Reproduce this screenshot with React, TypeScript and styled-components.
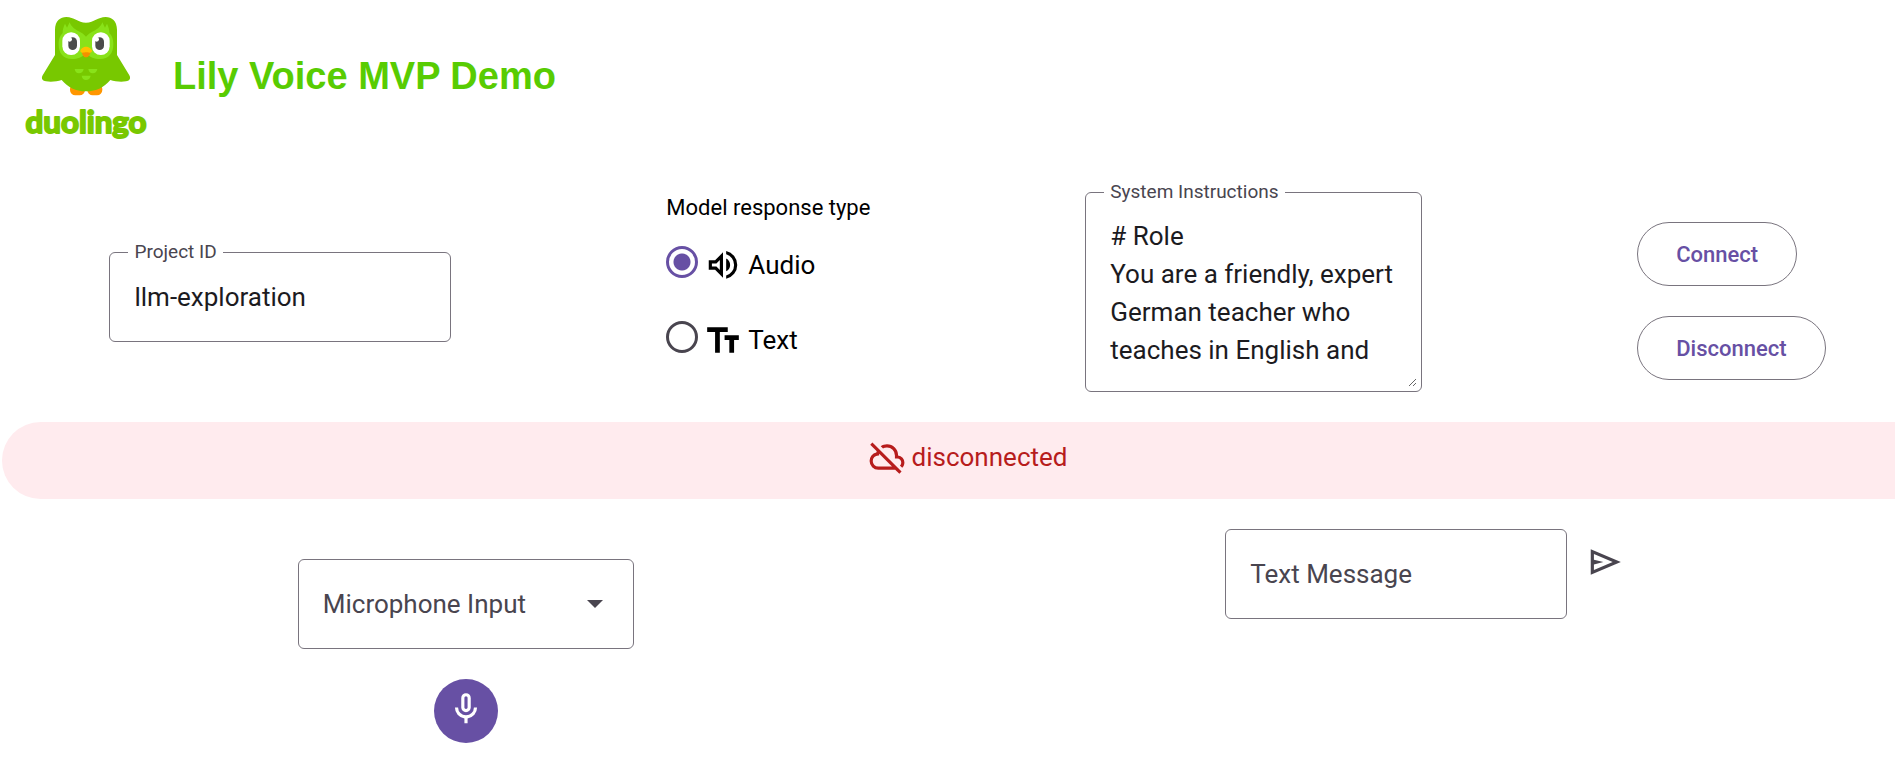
import React, { useState } from "react";
import styled, { createGlobalStyle } from "styled-components";

const color = {
  brand: "#58cc02",
  primary: "#6750a4",
  outline: "#79747e",
  text: "#1c1b1f",
  muted: "#49454f",
  error: "#b71c1c",
  errorBg: "#ffebee",
};

const GlobalStyle = createGlobalStyle`
  * { box-sizing: border-box; }
  body {
    margin: 0;
    background: #fff;
    color: #000;
    font-family: Roboto, "Liberation Sans", sans-serif;
    overflow-x: hidden;
  }
  button, input, select, textarea { font-family: inherit; }
`;

const Page = styled.div`
  width: calc(100% + 36px);
  margin-left: 2px;
  padding-bottom: 24px;
`;

const Header = styled.header`
  display: flex;
  align-items: center;
  gap: 13px;
  padding: 5px 13px 0;
`;

const Title = styled.h1`
  margin: 0;
  padding-bottom: 4px;
  color: ${color.brand};
  font: bold 38px/44px "Liberation Sans", Arial, sans-serif;
`;

const Row = styled.section<{ $align: string }>`
  display: flex;
  flex-wrap: wrap;
  justify-content: space-around;
  align-items: ${(p) => p.$align};
`;

const ConfigRow = styled(Row)`
  padding: 42px 0 20px;
`;

const MediaRow = styled(Row)`
  padding-top: 30px;
`;

const Outlined = styled.div<{ $width: number }>`
  position: relative;
  display: flex;
  width: ${(p) => p.$width}px;
  min-height: 90px;
  border: 1px solid ${color.outline};
  border-radius: 6px;
`;

const FloatingLabel = styled.label`
  position: absolute;
  top: -12px;
  left: 18px;
  padding: 0 6px;
  background: #fff;
  color: ${color.muted};
  font-size: 19px;
  line-height: 22px;
`;

const TextInput = styled.input`
  flex: 1;
  min-width: 0;
  padding: 0 24px;
  border: 0;
  outline: 0;
  background: none;
  color: ${color.text};
  font-size: 26px;
  &::placeholder { color: ${color.muted}; opacity: 1; }
`;

const InstructionsField = styled(Outlined)`
  margin-bottom: 10px;
  padding: 24px 4px 4px 0;
`;

const TextArea = styled.textarea`
  flex: 1;
  min-width: 0;
  height: 170px;
  padding: 0 20px 0 24px;
  border: 0;
  outline: 0;
  background: none;
  color: ${color.text};
  font-size: 26px;
  line-height: 38px;
  overflow: hidden;
  resize: vertical;
`;

const RadioGroup = styled.fieldset`
  margin: 0;
  padding: 0 0 32px;
  border: 0;
`;

const Legend = styled.legend`
  padding: 0;
  font-size: 22px;
  line-height: 28px;
`;

const RadioList = styled.div`
  display: flex;
  flex-direction: column;
  gap: 11px;
  padding-top: 8px;
`;

const RadioRow = styled.div`
  display: flex;
  align-items: center;
  gap: 6px;
  height: 64px;
`;

const Radio = styled.input`
  appearance: none;
  flex: none;
  width: 32px;
  height: 32px;
  margin: 0;
  border: 3px solid ${color.muted};
  border-radius: 50%;
  &:checked {
    border-color: ${color.primary};
    background: radial-gradient(circle, ${color.primary} 0 8px, transparent 9px);
  }
`;

const RadioLabel = styled.label`
  display: flex;
  align-items: center;
  gap: 6px;
  padding-top: 6px;
  font-size: 26px;
  line-height: 38px;
`;

const ButtonColumn = styled.div`
  display: flex;
  flex-direction: column;
  align-items: flex-start;
  gap: 30px;
  padding-top: 8px;
`;

const OutlinedButton = styled.button`
  height: 64px;
  padding: 0 38px;
  border: 1px solid ${color.outline};
  border-radius: 32px;
  background: none;
  color: ${color.primary};
  font-size: 22px;
  font-weight: 500;
`;

const StatusBanner = styled.div`
  display: flex;
  justify-content: center;
  align-items: center;
  gap: 6px;
  padding: 16px 0 23px;
  border-radius: 39px;
  background: ${color.errorBg};
  color: ${color.error};
  font-size: 26px;
  line-height: 38px;
`;

const MicColumn = styled.div`
  display: flex;
  flex-direction: column;
  align-items: center;
  gap: 30px;
  padding-top: 30px;
`;

const Select = styled.select`
  appearance: none;
  flex: 1;
  padding: 0 60px 0 24px;
  border: 0;
  outline: 0;
  background: none;
  color: ${color.muted};
  font-size: 26px;
`;

const SelectArrow = styled.svg`
  position: absolute;
  top: 40px;
  right: 30px;
  pointer-events: none;
`;

const MicButton = styled.button`
  display: grid;
  place-items: center;
  width: 64px;
  height: 64px;
  padding: 0 0 4px;
  border: 0;
  border-radius: 50%;
  background: ${color.primary};
  color: #fff;
`;

const MessageGroup = styled.div`
  display: flex;
  align-items: flex-start;
  gap: 6px;
`;

const SendButton = styled.button`
  display: grid;
  place-items: center;
  width: 64px;
  height: 66px;
  padding: 0;
  border: 0;
  background: none;
  color: ${color.muted};
`;

const icons = {
  volume:
    "M560-131v-82q90-26 145-100t55-168q0-94-55-168T560-749v-82q124 28 202 125.5T840-481q0 127-78 224.5T560-131ZM120-360v-240h160l200-200v640L280-360H120Zm440 40v-322q47 22 73.5 66t26.5 96q0 51-26.5 94.5T560-320ZM400-606l-86 86H200v80h114l86 86v-252Z",
  text: "M280-160v-520H80v-120h520v120H400v520H280Zm360 0v-320H520v-120h360v120H760v320H640Z",
  cloudOff:
    "M792-56 686-160H260q-92 0-156-64T40-380q0-77 47.5-137T210-594q3-8 6-15.5t6-16.5L56-792l56-56 736 736-56 56ZM260-240h346L284-562q-2 11-3 21t-1 21h-20q-58 0-99 41t-41 99q0 58 41 99t99 41Zm604 30-58-56q17-14 25.5-32.5T840-340q0-42-29-71t-71-29h-60v-80q0-83-58.5-141.5T480-720q-27 0-52 6.5T380-693l-58-58q35-24 74.5-36.5T480-800q117 0 198.5 81.5T760-520q69 8 114.5 59.5T920-340q0 39-15 72.5T864-210Z",
  mic: "M480-400q-50 0-85-35t-35-85v-240q0-50 35-85t85-35q50 0 85 35t35 85v240q0 50-35 85t-85 35Zm-40 280v-123q-104-14-172-93t-68-184h80q0 83 58.5 141.5T480-320q83 0 141.5-58.5T680-520h80q0 105-68 184t-172 93v123h-80Zm40-360q17 0 28.5-11.5T520-520v-240q0-17-11.5-28.5T480-800q-17 0-28.5 11.5T440-760v240q0 17 11.5 28.5T480-480Z",
  send: "M120-160v-640l760 320-760 320Zm80-120 474-200-474-200v140l240 60-240 60v140Z",
};

function Icon({ name }: { name: keyof typeof icons }) {
  return (
    <svg width="38" height="38" viewBox="0 -960 960 960" fill="currentColor" aria-hidden="true">
      <path d={icons[name]} />
    </svg>
  );
}

function Logo() {
  return (
    <svg width="145" height="145" viewBox="0 0 435 435" role="img" aria-label="duolingo">
      <rect x="165" y="236" width="45" height="35" rx="16" fill="#ff9600" />
      <rect x="217" y="236" width="45" height="35" rx="16" fill="#ff9600" />
      <path
        fill="#78c800"
        d="M120 74C120 48 136 36 154 36C178 36 188 53 213 53C238 53 248 36 272 36C290 36 306 48 306 74V150L343 211C349 222 342 228 333 229C316 232 300 229 286 225C268 247 244 259 213 259C182 259 158 247 140 225C126 229 110 232 93 229C84 228 77 222 83 211L120 150Z"
      />
      <path
        fill="#89e219"
        d="M131 118C131 100 136 91 143 84C143 74 145 66 150 56L156 68L164 52C169 66 181 75 199 83C205 86 208 89 213 95C218 89 221 86 227 83C245 75 257 66 262 52L270 68L276 56C281 66 283 74 283 84C290 91 295 100 295 118C295 146 281 162 255 162C237 162 227 156 213 146C199 156 189 162 171 162C145 162 131 146 131 118Z"
      />
      <rect x="142" y="82" width="53" height="68" rx="26" fill="#fff" />
      <rect x="231" y="82" width="53" height="68" rx="26" fill="#fff" />
      <rect x="160" y="97" width="26" height="38" rx="13" fill="#4b4b4b" />
      <rect x="241" y="97" width="26" height="38" rx="13" fill="#4b4b4b" />
      <circle cx="164" cy="103" r="7" fill="#fff" />
      <circle cx="245" cy="103" r="7" fill="#fff" />
      <path fill="#f49000" d="M200 137H227C227 148 220 157 213 157C206 157 200 148 200 137Z" />
      <path fill="#ffc200" d="M196 138C196 131 206 125 213 125C220 125 231 131 231 138C231 146 218 142 213 142C208 142 196 146 196 138Z" />
      <path
        fill="#89e219"
        d="M179 192H206C205 200 199 205 192 205C185 205 180 200 179 192ZM220 192H247C246 200 240 205 233 205C226 205 221 200 220 192ZM200 212H227C226 220 220 225 213 225C206 225 201 220 200 212Z"
      />
      <text
        x="213"
        y="385"
        textAnchor="middle"
        fontFamily="Lato, sans-serif"
        fontWeight="700"
        fontSize="94"
        fill="#78c800"
        stroke="#78c800"
        strokeWidth="6"
        strokeLinejoin="round"
      >
        duolingo
      </text>
    </svg>
  );
}

const instructions =
  "# Role\nYou are a friendly, expert German teacher who teaches in English and";

export default function App() {
  const [mode, setMode] = useState("audio");
  return (
    <>
      <GlobalStyle />
      <Page>
        <Header>
          <Logo />
          <Title>Lily Voice MVP Demo</Title>
        </Header>
        <main>
          <ConfigRow $align="center">
            <Outlined $width={342}>
              <FloatingLabel htmlFor="project">Project ID</FloatingLabel>
              <TextInput id="project" defaultValue="llm-exploration" />
            </Outlined>
            <RadioGroup>
              <Legend>Model response type</Legend>
              <RadioList>
                <RadioRow>
                  <Radio type="radio" name="mode" id="audio" checked={mode === "audio"} onChange={() => setMode("audio")} />
                  <RadioLabel htmlFor="audio">
                    <Icon name="volume" />
                    Audio
                  </RadioLabel>
                </RadioRow>
                <RadioRow>
                  <Radio type="radio" name="mode" id="text" checked={mode === "text"} onChange={() => setMode("text")} />
                  <RadioLabel htmlFor="text">
                    <Icon name="text" />
                    Text
                  </RadioLabel>
                </RadioRow>
              </RadioList>
            </RadioGroup>
            <InstructionsField $width={337}>
              <FloatingLabel htmlFor="instructions">System Instructions</FloatingLabel>
              <TextArea id="instructions" spellCheck={false} defaultValue={instructions} />
            </InstructionsField>
            <ButtonColumn>
              <OutlinedButton type="button">Connect</OutlinedButton>
              <OutlinedButton type="button">Disconnect</OutlinedButton>
            </ButtonColumn>
          </ConfigRow>
          <StatusBanner role="status">
            <Icon name="cloudOff" />
            disconnected
          </StatusBanner>
          <MediaRow $align="flex-start">
            <MicColumn>
              <Outlined $width={336}>
                <Select aria-label="Microphone Input" defaultValue="">
                  <option value="">Microphone Input</option>
                </Select>
                <SelectArrow width="16" height="8" viewBox="0 0 16 8" aria-hidden="true">
                  <path d="M0 0H16L8 8Z" fill={color.muted} />
                </SelectArrow>
              </Outlined>
              <MicButton type="button" aria-label="Toggle microphone">
                <Icon name="mic" />
              </MicButton>
            </MicColumn>
            <MessageGroup>
              <Outlined $width={342}>
                <TextInput aria-label="Text Message" placeholder="Text Message" />
              </Outlined>
              <SendButton type="button" aria-label="Send">
                <Icon name="send" />
              </SendButton>
            </MessageGroup>
          </MediaRow>
        </main>
      </Page>
    </>
  );
}
